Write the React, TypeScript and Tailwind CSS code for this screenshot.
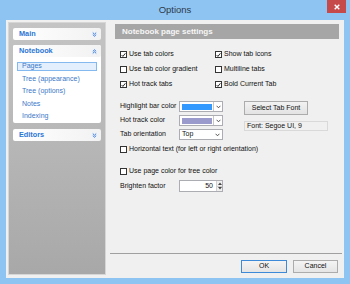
import React from "react";

const font = { fontFamily: '"Liberation Sans", Arial, sans-serif' };

function Check({ on, label }: { on?: boolean; label: string }) {
  return (
    <div className="flex items-center h-[15px] gap-[2px] text-[7px] text-[#111]">
      <div className="w-[7px] h-[7px] border border-[#333] bg-white flex items-center justify-center shrink-0">
        {on && (
          <svg width="6" height="6" viewBox="0 0 6 6">
            <path d="M0.8 3.1 L2.3 4.7 L5.3 0.9" fill="none" stroke="#111" strokeWidth="1.1" />
          </svg>
        )}
      </div>
      <span>{label}</span>
    </div>
  );
}

function Chevrons({ up }: { up?: boolean }) {
  return (
    <svg width="7" height="7" viewBox="0 0 7 7" className="shrink-0">
      <circle cx="3.5" cy="3.5" r="3.4" fill="#eef3fa" />
      {up ? (
        <path d="M1.8 3.4 L3.5 1.8 L5.2 3.4 M1.8 5.4 L3.5 3.8 L5.2 5.4" fill="none" stroke="#2f6fd0" strokeWidth="0.9" />
      ) : (
        <path d="M1.8 1.6 L3.5 3.2 L5.2 1.6 M1.8 3.6 L3.5 5.2 L5.2 3.6" fill="none" stroke="#2f6fd0" strokeWidth="0.9" />
      )}
    </svg>
  );
}

function Arrow() {
  return (
    <svg width="5" height="4" viewBox="0 0 5 4">
      <path d="M0.6 0.8 L2.5 2.8 L4.4 0.8" fill="none" stroke="#444" strokeWidth="0.9" />
    </svg>
  );
}

function ColorCombo({ color }: { color: string }) {
  return (
    <div className="w-[44px] h-[11px] border border-[#abadb3] bg-white flex items-stretch">
      <div className="flex-1 m-[1.5px] mr-[1px]" style={{ background: color }} />
      <div className="w-[9px] border-l border-[#c7c7c7] flex items-center justify-center">
        <Arrow />
      </div>
    </div>
  );
}

function GroupHead({ title, up }: { title: string; up?: boolean }) {
  return (
    <div className="h-[12px] flex items-center justify-between px-[6px] pr-[3px] bg-gradient-to-r from-white to-[#f2f2f2] rounded-[2px]">
      <span className="text-[7.3px] font-bold text-[#2b76d6]">{title}</span>
      <Chevrons up={up} />
    </div>
  );
}

export default function App() {
  const items = ["Pages", "Tree (appearance)", "Tree (options)", "Notes", "Indexing"];
  return (
    <div className="w-[350px] h-[284px] bg-[#8ec4f2] flex flex-col overflow-hidden" style={font}>
      {/* title bar */}
      <div className="h-[20px] relative flex items-center justify-center shrink-0">
        <span className="text-[9.5px] text-[#2d3a4a]">Options</span>
        <div className="absolute right-[4px] top-0 w-[19px] h-[13px] bg-[#c74a4a] flex items-center justify-center">
          <svg width="6" height="6" viewBox="0 0 6 6">
            <path d="M0.7 0.7 L5.3 5.3 M5.3 0.7 L0.7 5.3" stroke="white" strokeWidth="1.4" />
          </svg>
        </div>
      </div>

      {/* client */}
      <div className="mx-[6px] mb-[6px] flex-1 bg-[#f0f0f0] flex">
        {/* left panel */}
        <div className="w-[98px] ml-[2px] mt-[2px] mb-[3px] border border-[#d6d6d6] bg-gradient-to-b from-[#c4c4c4] to-[#a8a8a8] px-[4px] pt-[5px] flex flex-col gap-[5px]">
          <GroupHead title="Main" />
          <div className="bg-white rounded-[2px] flex flex-col pb-[0.5px]">
            <GroupHead title="Notebook" up />
            <div className="flex flex-col pt-[3px]">
              {items.map((t, i) => (
                <div key={t} className="h-[12.5px] flex items-center px-[4px]">
                  <span
                    className={
                      i === 0
                        ? "w-full h-[9.5px] flex items-center pl-[4px] border border-[#84b9ef] bg-[#e3effc] text-[7px] text-[#3d78c8]"
                        : "pl-[5px] text-[7px] text-[#3d78c8]"
                    }
                  >
                    {t}
                  </span>
                </div>
              ))}
            </div>
          </div>
          <div className="mt-[1px]">
            <GroupHead title="Editors" />
          </div>
        </div>

        {/* right side */}
        <div className="flex-1 ml-[4px] mr-[2px] flex flex-col">
          <div className="mt-[4px] ml-[5px] mr-[3px] h-[15px] bg-[#a6a6a6] flex items-center px-[7px]">
            <span className="text-[8px] font-bold text-[#f7f7f7]">Notebook page settings</span>
          </div>

          <div className="ml-[10px] mt-[8px] grid grid-cols-[95px_1fr]">
            <Check on label="Use tab colors" />
            <Check on label="Show tab icons" />
            <Check label="Use tab color gradient" />
            <Check label="Multiline tabs" />
            <Check on label="Hot track tabs" />
            <Check on label="Bold Current Tab" />
          </div>

          <div className="ml-[10px] mt-[9px] flex">
            <div className="flex flex-col gap-[3px]">
              <div className="flex items-center h-[11px]">
                <span className="w-[59px] text-[7px] text-[#111]">Highlight bar color</span>
                <ColorCombo color="#3399ff" />
              </div>
              <div className="flex items-center h-[11px]">
                <span className="w-[59px] text-[7px] text-[#111]">Hot track color</span>
                <ColorCombo color="#9a9acc" />
              </div>
              <div className="flex items-center h-[11px]">
                <span className="w-[59px] text-[7px] text-[#111]">Tab orientation</span>
                <div className="w-[44px] h-[11px] border border-[#abadb3] bg-white flex items-center justify-between pl-[2px] pr-[2px]">
                  <span className="text-[7px] text-[#111]">Top</span>
                  <Arrow />
                </div>
              </div>
            </div>
            <div className="ml-[21px] flex flex-col">
              <div className="w-[64px] h-[14px] border border-[#acacac] bg-gradient-to-b from-[#f2f2f2] to-[#e3e3e3] flex items-center justify-center">
                <span className="text-[7px] text-[#111]">Select Tab Font</span>
              </div>
              <div className="mt-[6px] w-[84px] h-[10px] border border-[#d9d9d9] bg-[#f0f0f0] flex items-center pl-[2px]">
                <span className="text-[7px] text-[#111]">Font: Segoe UI, 9</span>
              </div>
            </div>
          </div>

          <div className="ml-[10px] mt-[2px]">
            <Check label="Horizontal text (for left or right orientation)" />
          </div>
          <div className="ml-[10px] mt-[7px]">
            <Check label="Use page color for tree color" />
          </div>
          <div className="ml-[10px] mt-[1px] flex items-center h-[12px]">
            <span className="w-[59px] text-[7px] text-[#111]">Brighten factor</span>
            <div className="w-[44px] h-[12px] border border-[#abadb3] bg-white flex items-stretch">
              <div className="flex-1 flex items-center justify-end pr-[3px]">
                <span className="text-[7px] text-[#111]">50</span>
              </div>
              <div className="w-[6px] flex flex-col border-l border-[#d0d0d0] bg-[#f0f0f0]">
                <div className="flex-1 flex items-center justify-center border-b border-[#d0d0d0]">
                  <svg width="4" height="3" viewBox="0 0 4 3"><path d="M0 3 L2 0.5 L4 3 Z" fill="#444" /></svg>
                </div>
                <div className="flex-1 flex items-center justify-center">
                  <svg width="4" height="3" viewBox="0 0 4 3"><path d="M0 0 L2 2.5 L4 0 Z" fill="#444" /></svg>
                </div>
              </div>
            </div>
          </div>

          <div className="mt-auto border-t border-[#a0a0a0] h-[0px]" />
          <div className="mt-[6px] mb-[5px] flex justify-end gap-[6px] pr-[4px]">
            <div className="w-[46px] h-[13px] border border-[#3c8ad8] bg-gradient-to-b from-[#f4f4f4] to-[#e5e5e5] flex items-center justify-center">
              <span className="text-[7px] text-[#111]">OK</span>
            </div>
            <div className="w-[45px] h-[13px] border border-[#acacac] bg-gradient-to-b from-[#f4f4f4] to-[#e5e5e5] flex items-center justify-center">
              <span className="text-[7px] text-[#111]">Cancel</span>
            </div>
          </div>
        </div>
      </div>
    </div>
  );
}
